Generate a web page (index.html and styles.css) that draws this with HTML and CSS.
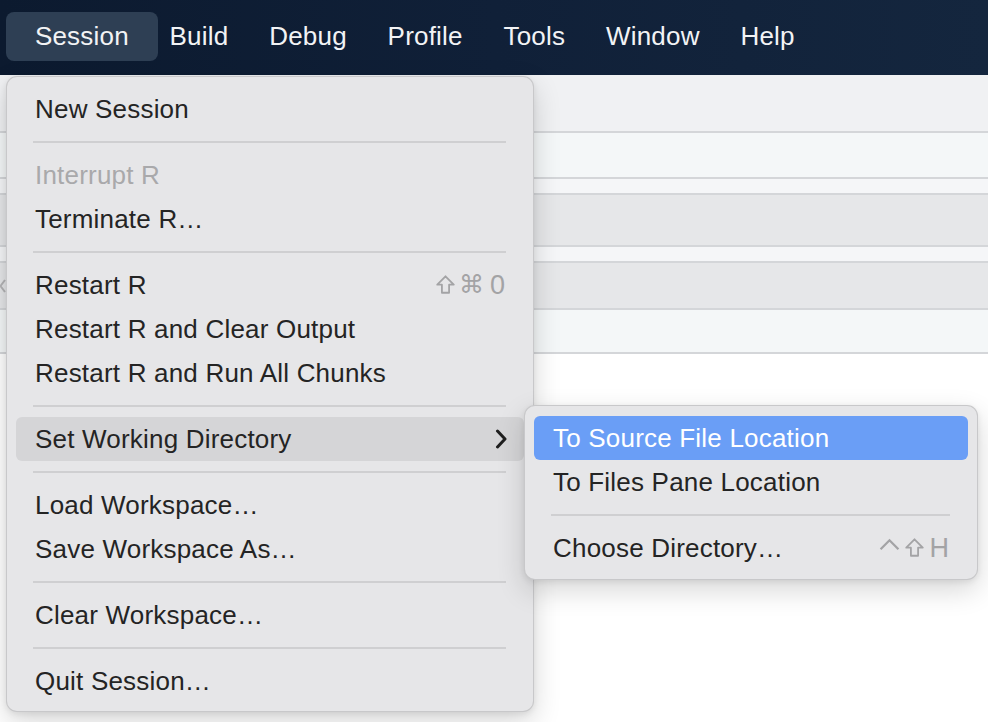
FILE: index.html
```html
<!DOCTYPE html>
<html lang="en">
<head>
<meta charset="utf-8">
<title>Session menu</title>
<link rel="stylesheet" href="styles.css">
</head>
<body>
<div class="app">
  <nav class="menubar">
    <span class="mb-item active">Session</span>
    <span class="mb-item">Build</span>
    <span class="mb-item">Debug</span>
    <span class="mb-item">Profile</span>
    <span class="mb-item">Tools</span>
    <span class="mb-item">Window</span>
    <span class="mb-item">Help</span>
  </nav>
  <main class="backdrop">
    <div class="row r1"></div>
    <div class="row r2"></div>
    <div class="row r3"></div>
    <div class="row r4"></div>
    <div class="row r5"></div>
    <div class="row r6">
      <svg class="edge-chev" width="6" height="14" viewBox="0 0 6 14"><path d="M5 1 L0.5 7 L5 13" fill="none" stroke="#b4b4b6" stroke-width="2"/></svg>
    </div>
    <div class="row r7"></div>
  </main>

  <div class="menu main-menu">
    <div class="item">New Session</div>
    <div class="sep"></div>
    <div class="item disabled">Interrupt R</div>
    <div class="item">Terminate R…</div>
    <div class="sep"></div>
    <div class="item"><span>Restart R</span>
      <span class="shortcut">
        <svg class="k-shift" viewBox="0 0 18 18"><path d="M9 1.2 L16.8 9.2 H12.4 V16.8 H5.6 V9.2 H1.2 Z" fill="none" stroke="#a3a3a5" stroke-width="1.7" stroke-linejoin="round"/></svg>
        <span class="k-cmd">⌘</span><span class="k-txt">0</span>
      </span>
    </div>
    <div class="item">Restart R and Clear Output</div>
    <div class="item">Restart R and Run All Chunks</div>
    <div class="sep"></div>
    <div class="item open"><span>Set Working Directory</span>
      <svg class="chev" width="12" height="20" viewBox="0 0 12 20"><path d="M2.5 2 L10 10 L2.5 18" fill="none" stroke="#1f1f1f" stroke-width="3" stroke-linecap="round" stroke-linejoin="round"/></svg>
    </div>
    <div class="sep"></div>
    <div class="item">Load Workspace…</div>
    <div class="item">Save Workspace As…</div>
    <div class="sep"></div>
    <div class="item">Clear Workspace…</div>
    <div class="sep"></div>
    <div class="item">Quit Session…</div>
  </div>

  <div class="menu sub-menu">
    <div class="item selected">To Source File Location</div>
    <div class="item">To Files Pane Location</div>
    <div class="sep"></div>
    <div class="item"><span>Choose Directory…</span>
      <span class="shortcut">
        <svg class="k-ctrl" viewBox="0 0 20 12"><path d="M1.5 10.5 L10 2 L18.5 10.5" fill="none" stroke="#a3a3a5" stroke-width="2.2"/></svg>
        <svg class="k-shift" viewBox="0 0 18 18"><path d="M9 1.2 L16.8 9.2 H12.4 V16.8 H5.6 V9.2 H1.2 Z" fill="none" stroke="#a3a3a5" stroke-width="1.7" stroke-linejoin="round"/></svg>
        <span class="k-txt">H</span>
      </span>
    </div>
  </div>
</div>
</body>
</html>
```
FILE: styles.css
```css
html, body {
  margin: 0;
  padding: 0;
  background: #ffffff;
}
body {
  width: 988px;
  height: 722px;
  overflow: hidden;
  font-family: "Liberation Sans", "DejaVu Sans", Arial, sans-serif;
}
.app {
  position: relative;
  width: 988px;
  height: 722px;
  background: #ffffff;
}

/* top menu bar */
.menubar {
  display: flex;
  align-items: flex-start;
  height: 75px;
  padding: 12px 0 0 14.5px;
  box-sizing: border-box;
  background: linear-gradient(90deg, #0c1a2f 0%, #102038 50%, #14263e 100%);
}
.mb-item {
  position: relative;
  isolation: isolate;
  height: 49px;
  line-height: 49px;
  padding: 0 20.4px;
  font-size: 26px;
  letter-spacing: 0.2px;
  color: #f2f3f5;
}
.mb-item.active::before {
  content: "";
  position: absolute;
  top: 0;
  bottom: 0;
  left: -8.5px;
  right: -8.5px;
  border-radius: 8px;
  background: #2e3f54;
  z-index: -1;
}

/* background rows */
.backdrop {
  display: block;
}
.row {
  display: flex;
  align-items: center;
  border-bottom: 2px solid #d4d6d9;
  position: relative;
}
.r1 { height: 56px; background: #f0f1f3; }
.r2 { height: 44px; background: #f4f7f8; }
.r3 { height: 14px; background: #f5f6f8; }
.r4 { height: 50px; background: #e6e7e9; }
.r5 { height: 14px; background: #f5f6f8; }
.r6 { height: 45px; background: #e6e7e9; }
.r7 { height: 42px; background: #f4f7f8; }
.edge-chev {
  display: block;
  flex: none;
}

/* menus */
.menu {
  position: absolute;
  box-sizing: border-box;
  background: #e6e6e8;
  border-radius: 11px;
  border: 1px solid rgba(0, 0, 0, 0.13);
  box-shadow: 0 10px 28px rgba(0, 0, 0, 0.16), 0 2px 6px rgba(0, 0, 0, 0.08);
  padding: 10px 9px 8px;
  display: flex;
  flex-direction: column;
}
.main-menu {
  left: 6px;
  top: 76px;
  width: 528px;
  height: 636px;
}
.sub-menu {
  left: 524px;
  top: 405px;
  width: 454px;
  height: 175px;
}
.item {
  display: flex;
  align-items: center;
  justify-content: space-between;
  height: 44px;
  line-height: 44px;
  padding: 0 19px;
  border-radius: 6px;
  font-size: 26px;
  letter-spacing: 0.2px;
  color: #242424;
  white-space: nowrap;
}
.item.disabled { color: #a9a9ab; }
.item.open { background: #d5d5d7; }
.item.selected { background: #6a9ef6; color: #ffffff; }
.shortcut {
  display: flex;
  align-items: center;
  gap: 3px;
  color: #a3a3a5;
  letter-spacing: 0;
}
.k-shift {
  display: block;
  flex: none;
  width: 19px;
  height: 19px;
  margin-top: -1px;
}
.k-ctrl {
  display: block;
  flex: none;
  width: 21px;
  height: 13px;
  margin-top: -8px;
  margin-right: 2px;
}
.k-cmd {
  font-family: "DejaVu Sans", sans-serif;
  font-size: 25px;
  line-height: 44px;
  margin-left: 1px;
}
.k-txt {
  font-size: 27px;
  line-height: 44px;
  margin-left: 3px;
}
.chev { margin-right: -2px; flex: none; }
.sep {
  height: 2px;
  background: #cfcfd1;
  margin: 10px 18px 10px 17px;
  flex: none;
}
```
